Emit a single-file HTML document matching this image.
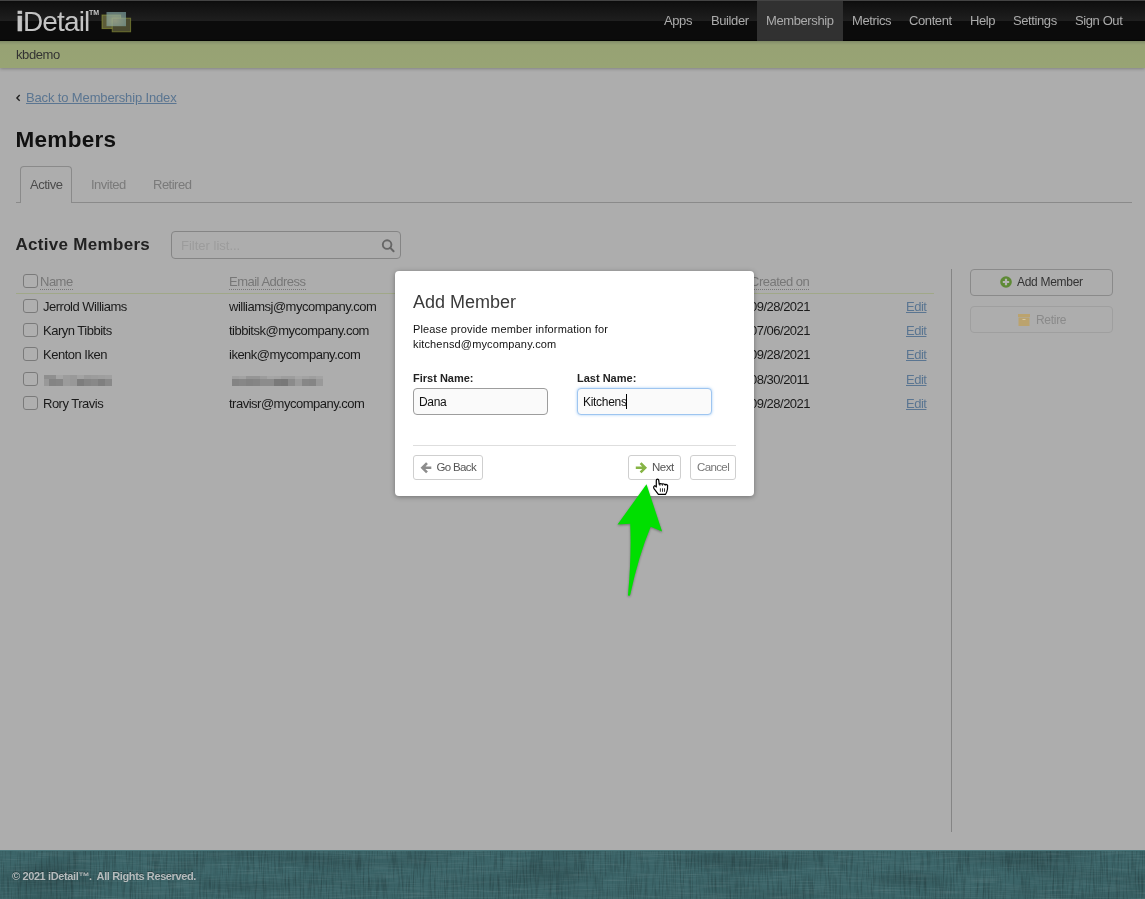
<!DOCTYPE html>
<html><head><meta charset="utf-8">
<style>
*{box-sizing:border-box;margin:0;padding:0}
html,body{width:1145px;height:899px;overflow:hidden}
body{font-family:"Liberation Sans",sans-serif;background:#adadad;position:relative;color:#222}
.a{position:absolute;white-space:nowrap}
#hdr{position:absolute;left:0;top:0;width:1145px;height:41px;background:linear-gradient(#444 0,#444 1px,#0c0c0c 1px,#101010 3px,#1e1e1e 20px,#1f1f1f 20.5px,#0b0b0b 21px,#0b0b0b 39.5px,#040404 40px,#040404 41px)}
.nav{position:absolute;top:1px;height:40px;line-height:40px;font-size:13px;letter-spacing:-0.4px;color:#ababab}
#green{position:absolute;left:0;top:41px;width:1145px;height:27px;background:linear-gradient(#7f8a64 0,#8d9870 2px,#97a274 4px,#98a474 27px);box-shadow:0 1px 3px rgba(0,0,0,.25)}
#foot{position:absolute;left:0;top:850px;width:1145px;height:49px;background:#3c6569;overflow:hidden}
#modal{position:absolute;left:395px;top:271px;width:359px;height:225px;background:#fff;border-radius:4px;box-shadow:0 1px 5px rgba(0,0,0,.35)}
.t13{font-size:13px;letter-spacing:-0.5px}
.cb{position:absolute;width:15px;height:14px;border:1px solid #7a7a7a;border-radius:3px;background:#afafaf}
.th{font-size:13px;letter-spacing:-0.5px;color:#777;border-bottom:1px dotted #777;line-height:13px;padding-bottom:1px}
.edit{color:#5a7591;text-decoration:underline}
.btn{position:absolute;border:1px solid #cfcfcf;border-radius:3px;background:#fff}
</style></head><body><div id="wrap" style="position:absolute;left:0;top:0;width:1145px;height:899px;will-change:transform">
<div id="hdr"></div>
<!-- logo -->
<div class="a" style="left:16px;top:6.5px;font-size:28px;color:#c4c4c4;letter-spacing:-0.85px;line-height:30px"><span style="font-weight:bold;-webkit-text-stroke:0.6px #c4c4c4">i</span>Detail</div>
<div class="a" style="left:89px;top:9px;font-size:7px;font-weight:bold;color:#c9c9c9;line-height:8px">TM</div>
<svg class="a" style="left:100px;top:11px" width="33" height="22" viewBox="0 0 33 22">
 <defs><radialGradient id="tg" cx="0.45" cy="0.6" r="0.7"><stop offset="0" stop-color="#b0bca5"/><stop offset="1" stop-color="#7aa0a0"/></radialGradient></defs>
 <rect x="2" y="4" width="18.6" height="13.6" fill="#5c5c38" stroke="#a2ab3c" stroke-opacity=".55" stroke-width="1"/>
 <rect x="12.2" y="7.2" width="18.4" height="13.6" fill="#4a4a30" stroke="#9aa23a" stroke-opacity=".55" stroke-width="1"/>
 <rect x="6.5" y="1" width="19.5" height="14.2" fill="url(#tg)" fill-opacity=".68"/>
</svg>
<div class="nav" style="left:664px">Apps</div>
<div class="nav" style="left:711px">Builder</div>
<div style="position:absolute;left:757px;top:1px;width:86px;height:40px;background:#313131"></div>
<div class="nav" style="left:766px">Membership</div>
<div class="nav" style="left:852px">Metrics</div>
<div class="nav" style="left:909px">Content</div>
<div class="nav" style="left:970px">Help</div>
<div class="nav" style="left:1013px">Settings</div>
<div class="nav" style="left:1075px">Sign Out</div>
<div id="green"></div>
<div class="a" style="left:16px;top:47px;font-size:13px;letter-spacing:-0.4px;color:#333">kbdemo</div>

<!-- back link -->
<svg class="a" style="left:14px;top:92px" width="8" height="11" viewBox="14 92 8 11"><path d="M19.7 95 L16.9 97.9 L19.7 100.8" fill="none" stroke="#222" stroke-width="1.4"/></svg>
<div class="a" style="left:26px;top:90px;font-size:13px;letter-spacing:-0.14px;color:#5a7591;text-decoration:underline">Back to Membership Index</div>
<div class="a" style="left:15.5px;top:127px;font-size:22.5px;font-weight:bold;letter-spacing:0.3px;color:#111">Members</div>

<!-- tabs -->
<div style="position:absolute;left:16px;top:202px;width:1116px;height:1px;background:#8a8a8a"></div>
<div style="position:absolute;left:20px;top:166px;width:52px;height:37px;border:1px solid #8a8a8a;border-bottom:none;border-radius:4px 4px 0 0;background:#adadad"></div>
<div class="a t13" style="left:30px;top:177px;color:#4c4c4c">Active</div>
<div class="a t13" style="left:91px;top:177px;color:#7a7a7a">Invited</div>
<div class="a t13" style="left:153px;top:177px;color:#7a7a7a">Retired</div>

<!-- active members + filter -->
<div class="a" style="left:15.5px;top:235px;font-size:17px;font-weight:bold;letter-spacing:0.3px;color:#222">Active Members</div>
<div style="position:absolute;left:171px;top:231px;width:230px;height:28px;border:1px solid #858585;border-radius:4px;background:#adadad"></div>
<div class="a" style="left:181px;top:238px;font-size:13px;color:#9c9c9c">Filter list...</div>
<svg class="a" style="left:380px;top:237px" width="16" height="17" viewBox="380 237 16 17"><circle cx="387.1" cy="244.6" r="4.3" fill="none" stroke="#666" stroke-width="1.9"/><path d="M390.3 247.9 L393.6 251.3" stroke="#666" stroke-width="2" stroke-linecap="round"/></svg>

<!-- table header -->
<div class="cb" style="left:23px;top:274px"></div>
<div class="a th" style="left:40px;top:275px">Name</div>
<div class="a th" style="left:229px;top:275px">Email Address</div>
<div class="a th" style="left:750px;top:275px">Created on</div>
<div style="position:absolute;left:16px;top:293px;width:918px;height:1px;background:#a0a888"></div>

<!-- rows -->
<div class="cb" style="left:23px;top:299px"></div>
<div class="a t13" style="left:43px;top:299px;color:#1a1a1a">Jerrold Williams</div>
<div class="a t13" style="left:229px;top:299px;color:#1a1a1a">williamsj@mycompany.com</div>
<div class="a t13" style="left:750px;top:299px;color:#1a1a1a">09/28/2021</div>
<div class="a t13 edit" style="left:906px;top:299px">Edit</div>

<div class="cb" style="left:23px;top:323px"></div>
<div class="a t13" style="left:43px;top:323px;color:#1a1a1a">Karyn Tibbits</div>
<div class="a t13" style="left:229px;top:323px;color:#1a1a1a">tibbitsk@mycompany.com</div>
<div class="a t13" style="left:750px;top:323px;color:#1a1a1a">07/06/2021</div>
<div class="a t13 edit" style="left:906px;top:323px">Edit</div>

<div class="cb" style="left:23px;top:347px"></div>
<div class="a t13" style="left:43px;top:347px;color:#1a1a1a">Kenton Iken</div>
<div class="a t13" style="left:229px;top:347px;color:#1a1a1a">ikenk@mycompany.com</div>
<div class="a t13" style="left:750px;top:347px;color:#1a1a1a">09/28/2021</div>
<div class="a t13 edit" style="left:906px;top:347px">Edit</div>

<div class="cb" style="left:23px;top:372px"></div>
<svg class="a" style="left:44px;top:375px" width="68" height="11"><rect x="0" y="0" width="5" height="4" fill="#8e8e8e"/><rect x="0" y="4" width="5" height="7" fill="#999999"/><rect x="5" y="0" width="7" height="4" fill="#8f8f8f"/><rect x="5" y="4" width="7" height="7" fill="#848484"/><rect x="12" y="0" width="7" height="4" fill="#a5a5a5"/><rect x="12" y="4" width="7" height="7" fill="#868686"/><rect x="19" y="0" width="7" height="4" fill="#9c9c9c"/><rect x="19" y="4" width="7" height="7" fill="#9b9b9b"/><rect x="26" y="0" width="7" height="4" fill="#999999"/><rect x="26" y="4" width="7" height="7" fill="#989898"/><rect x="33" y="0" width="7" height="4" fill="#a3a3a3"/><rect x="33" y="4" width="7" height="7" fill="#7d7d7d"/><rect x="40" y="0" width="7" height="4" fill="#9a9a9a"/><rect x="40" y="4" width="7" height="7" fill="#858585"/><rect x="47" y="0" width="7" height="4" fill="#9c9c9c"/><rect x="47" y="4" width="7" height="7" fill="#888888"/><rect x="54" y="0" width="7" height="4" fill="#9e9e9e"/><rect x="54" y="4" width="7" height="7" fill="#7f7f7f"/><rect x="61" y="0" width="7" height="4" fill="#a0a0a0"/><rect x="61" y="4" width="7" height="7" fill="#898989"/></svg>
<svg class="a" style="left:232px;top:376px" width="91" height="10"><rect x="0" y="0" width="7" height="3" fill="#9f9f9f"/><rect x="0" y="3" width="7" height="7" fill="#848484"/><rect x="7" y="0" width="7" height="3" fill="#a2a2a2"/><rect x="7" y="3" width="7" height="7" fill="#878787"/><rect x="14" y="0" width="7" height="3" fill="#959595"/><rect x="14" y="3" width="7" height="7" fill="#838383"/><rect x="21" y="0" width="7" height="3" fill="#959595"/><rect x="21" y="3" width="7" height="7" fill="#858585"/><rect x="28" y="0" width="7" height="3" fill="#9c9c9c"/><rect x="28" y="3" width="7" height="7" fill="#8c8c8c"/><rect x="35" y="0" width="7" height="3" fill="#a5a5a5"/><rect x="35" y="3" width="7" height="7" fill="#8c8c8c"/><rect x="42" y="0" width="7" height="3" fill="#a3a3a3"/><rect x="42" y="3" width="7" height="7" fill="#7a7a7a"/><rect x="49" y="0" width="7" height="3" fill="#9d9d9d"/><rect x="49" y="3" width="7" height="7" fill="#787878"/><rect x="56" y="0" width="7" height="3" fill="#9d9d9d"/><rect x="56" y="3" width="7" height="7" fill="#8b8b8b"/><rect x="63" y="0" width="7" height="3" fill="#a6a6a6"/><rect x="63" y="3" width="7" height="7" fill="#9b9b9b"/><rect x="70" y="0" width="7" height="3" fill="#a2a2a2"/><rect x="70" y="3" width="7" height="7" fill="#878787"/><rect x="77" y="0" width="7" height="3" fill="#9e9e9e"/><rect x="77" y="3" width="7" height="7" fill="#858585"/><rect x="84" y="0" width="7" height="3" fill="#a3a3a3"/><rect x="84" y="3" width="7" height="7" fill="#999999"/></svg>
<div class="a t13" style="left:750px;top:372px;color:#1a1a1a">08/30/2011</div>
<div class="a t13 edit" style="left:906px;top:372px">Edit</div>

<div class="cb" style="left:23px;top:396px"></div>
<div class="a t13" style="left:43px;top:396px;color:#1a1a1a">Rory Travis</div>
<div class="a t13" style="left:229px;top:396px;color:#1a1a1a">travisr@mycompany.com</div>
<div class="a t13" style="left:750px;top:396px;color:#1a1a1a">09/28/2021</div>
<div class="a t13 edit" style="left:906px;top:396px">Edit</div>

<!-- divider + right buttons -->
<div style="position:absolute;left:951px;top:269px;width:1px;height:563px;background:#858585"></div>
<div style="position:absolute;left:970px;top:269px;width:143px;height:27px;border:1px solid #8a8a8a;border-radius:4px;background:#adadad"></div>
<svg class="a" style="left:1000px;top:276px" width="12" height="12" viewBox="0 0 12 12"><circle cx="6" cy="6" r="5.8" fill="#5e8a35"/><path d="M6 2.8V9.2M2.8 6H9.2" stroke="#b5b5b5" stroke-width="2.2"/></svg>
<div class="a" style="left:1017px;top:275px;font-size:12px;letter-spacing:-0.3px;color:#333">Add Member</div>
<div style="position:absolute;left:970px;top:306px;width:143px;height:27px;border:1px solid #9f9f9f;border-radius:4px;background:#adadad"></div>
<svg class="a" style="left:1018px;top:314px" width="12" height="12" viewBox="0 0 12 12"><rect x="0" y="0" width="12" height="3" fill="#bba36e"/><rect x="0.5" y="3.5" width="11" height="8.5" fill="#bba36e"/><path d="M4.5 5.5H7.5" stroke="#d8c8a0" stroke-width="1"/></svg>
<div class="a" style="left:1036px;top:313px;font-size:12px;letter-spacing:-0.3px;color:#8a8a8a">Retire</div>

<!-- footer -->
<div id="foot"><svg width="1145" height="49" style="position:absolute;left:0;top:0">
 <filter id="nz" x="0" y="0" width="100%" height="100%"><feTurbulence type="fractalNoise" baseFrequency="0.6 0.04" numOctaves="2" seed="3"/><feColorMatrix values="0 0 0 0 0  0 0 0 0 0  0 0 0 0 0  0 0 0 -1.1 0.62"/></filter>
 <filter id="nz2" x="0" y="0" width="100%" height="100%"><feTurbulence type="fractalNoise" baseFrequency="0.03 0.7" numOctaves="2" seed="7"/><feColorMatrix values="0 0 0 0 1  0 0 0 0 1  0 0 0 0 1  0 0 0 -0.9 0.5"/></filter>
 <filter id="nz3" x="0" y="0" width="100%" height="100%"><feTurbulence type="fractalNoise" baseFrequency="0.01 0.05" numOctaves="1" seed="11"/><feColorMatrix values="0 0 0 0 0  0 0 0 0 0  0 0 0 0 0  0 0 0 -1.2 0.62"/></filter>
 <rect width="1145" height="49" filter="url(#nz)" opacity=".45"/>
 <rect width="1145" height="49" filter="url(#nz2)" opacity=".2"/>
 <rect width="1145" height="49" filter="url(#nz3)" opacity=".4"/>
 <rect width="1145" height="1" fill="#4d777b"/>
</svg></div>
<div class="a" style="left:12px;top:870px;font-size:11px;font-weight:bold;letter-spacing:-0.38px;color:#b6bcbd;text-shadow:0 -1px 0 rgba(0,0,0,.3)">© 2021 iDetail™.&nbsp; All Rights Reserved.</div>

<!-- modal -->
<div id="modal"></div>
<div class="a" style="left:413px;top:292px;font-size:18px;color:#3a3a3a">Add Member</div>
<div class="a" style="left:413px;top:322px;font-size:11px;line-height:15px;letter-spacing:0.15px;color:#111">Please provide member information for<br>kitchensd@mycompany.com</div>
<div class="a" style="left:413px;top:372px;font-size:11px;font-weight:bold;color:#222">First Name:</div>
<div class="a" style="left:577px;top:372px;font-size:11px;font-weight:bold;color:#222">Last Name:</div>
<div style="position:absolute;left:413px;top:388px;width:135px;height:27px;border:1px solid #9d9d9d;border-radius:4px;background:#fafafa"></div>
<div class="a" style="left:419px;top:395px;font-size:12px;letter-spacing:-0.3px;color:#111">Dana</div>
<div style="position:absolute;left:577px;top:388px;width:135px;height:27px;border:1px solid #9ec5f0;border-radius:4px;background:#fafafa;box-shadow:0 0 3px rgba(140,190,245,.8)"></div>
<div class="a" style="left:583px;top:395px;font-size:12px;letter-spacing:-0.3px;color:#111">Kitchens</div>
<div style="position:absolute;left:626px;top:394px;width:1px;height:15px;background:#000"></div>
<div style="position:absolute;left:413px;top:445px;width:323px;height:1px;background:#dedede"></div>

<div class="btn" style="left:413px;top:455px;width:70px;height:25px"></div>
<svg class="a" style="left:418px;top:460px" width="16" height="16" viewBox="418 460 16 16"><path d="M427 463.2 L422.4 467.8 L427 472.4 M423 467.8 H431.3" fill="none" stroke="#8c8c8c" stroke-width="2.6"/></svg>
<div class="a" style="left:436.5px;top:461px;font-size:11.5px;letter-spacing:-0.65px;color:#555">Go Back</div>

<div class="btn" style="left:628px;top:455px;width:53px;height:25px"></div>
<svg class="a" style="left:632px;top:460px" width="16" height="16" viewBox="632 460 16 16"><path d="M640.6 463.2 L645.2 467.8 L640.6 472.4 M635.8 467.8 H644.5" fill="none" stroke="#86b445" stroke-width="2.6"/></svg>
<div class="a" style="left:652px;top:461px;font-size:11.5px;letter-spacing:-0.5px;color:#555">Next</div>

<div class="btn" style="left:690px;top:455px;width:46px;height:25px"></div>
<div class="a" style="left:697px;top:461px;font-size:11.5px;letter-spacing:-0.62px;color:#777">Cancel</div>

<!-- green arrow -->
<svg class="a" style="left:600px;top:470px" width="80" height="140" viewBox="600 470 80 140">
 <path d="M646.5 484.3 L662.1 531.4 L650.7 526.8 Q638.5 556 630.3 594.5 Q629.3 597 628 595 Q631.6 556 630.2 523.7 L617.5 524.4 Z" fill="#00df00" style="filter:drop-shadow(0.5px 1px 1px rgba(0,0,0,.35))"/>
</svg>
<!-- hand cursor -->
<svg class="a" style="left:650px;top:475.5px" width="22" height="22" viewBox="650 475 22 22">
 <path d="M656.3 486 L656.3 479.6 Q656.3 478.2 657.5 478.2 Q658.7 478.2 658.8 479.6 L659.2 483.2 Q660.5 482.2 661.9 483 Q663.3 482.3 664.7 483.5 Q666.6 482.9 667.6 484.3 L667.5 488 Q667 491 665.6 493.3 L658.4 493.4 L654 487.6 Q653 485.7 654.3 484.9 Q655.5 484.4 656.3 486 Z" fill="#fff" stroke="#000" stroke-width="1.2" stroke-linejoin="round"/>
 <path d="M660.4 487.3V490.8M662.5 487.3V490.8M664.5 487.3V490.8M659.9 483V484.8M662.4 483V484.8M665.2 483.4V485" stroke="#000" stroke-width="0.8"/>
</svg>
</div></body></html>
